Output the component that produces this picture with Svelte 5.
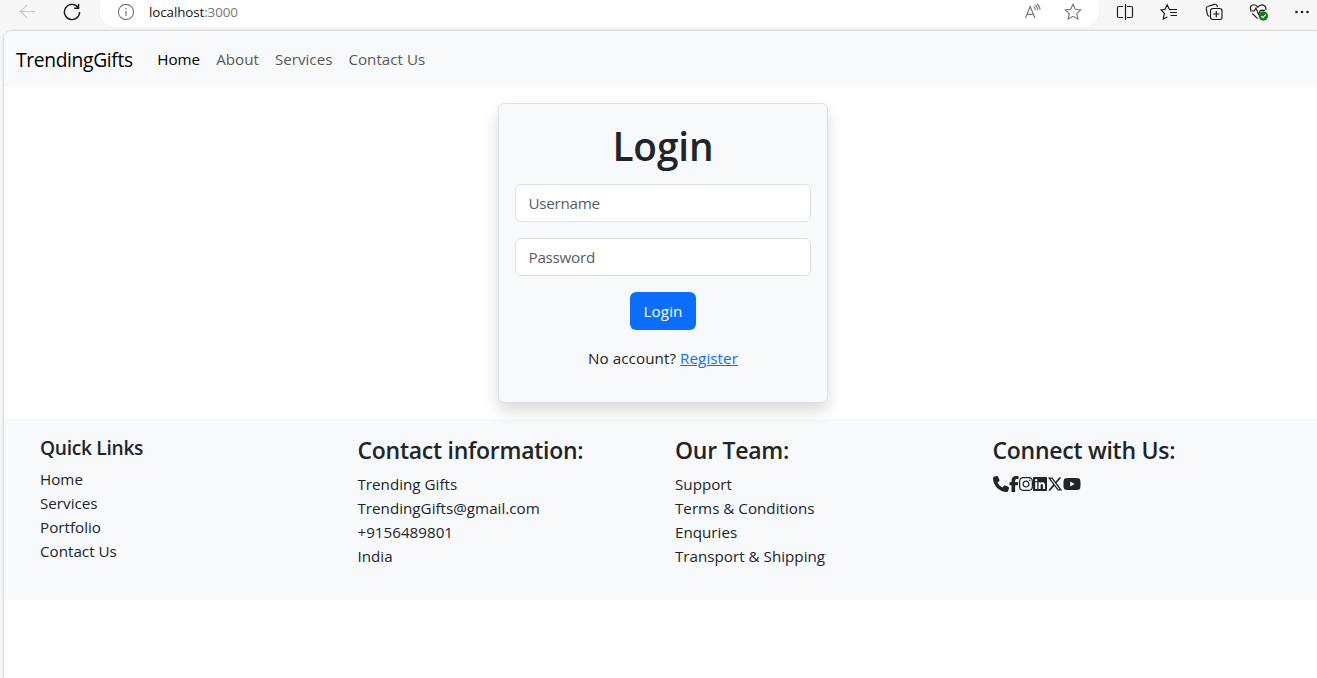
<script>
  const nav = ['Home', 'About', 'Services', 'Contact Us'];
  const columns = [
    { title: 'Contact information:', lines: ['Trending Gifts', 'TrendingGifts@gmail.com', '+9156489801', 'India'] },
    { title: 'Our Team:', lines: ['Support', 'Terms & Conditions', 'Enquries', 'Transport & Shipping'] }
  ];
  const social = [
    { w: 512, d: 'M164.9 24.6c-7.7-18.6-28-28.5-47.4-23.2l-88 24C12.1 30.2 0 46 0 64C0 311.4 200.6 512 448 512c18 0 33.8-12.1 38.6-29.5l24-88c5.3-19.4-4.6-39.7-23.2-47.4l-96-40c-16.3-6.8-35.2-2.1-46.3 11.6L304.7 368C234.3 334.7 177.3 277.7 144 207.3L193.3 167c13.7-11.2 18.4-30 11.6-46.3l-40-96z' },
    { w: 320, d: 'M80 299.3V512H196V299.3h86.5l18-97.8H196V166.9c0-51.7 20.3-71.5 72.7-71.5c16.3 0 29.4 .4 37 1.2V7.9C291.4 4 256.4 0 236.2 0C129.3 0 80 50.5 80 159.4v42.1H14v97.8H80z' },
    { w: 448, d: 'M224.1 141c-63.6 0-114.9 51.3-114.9 114.9s51.3 114.9 114.9 114.9S339 319.5 339 255.9 287.7 141 224.1 141zm0 189.6c-41.1 0-74.7-33.5-74.7-74.7s33.5-74.7 74.7-74.7 74.7 33.5 74.7 74.7-33.6 74.7-74.7 74.7zm146.4-194.3c0 14.9-12 26.8-26.8 26.8-14.9 0-26.8-12-26.8-26.8s12-26.8 26.8-26.8 26.8 12 26.8 26.8zm76.1 27.2c-1.7-35.9-9.9-67.7-36.2-93.9-26.2-26.2-58-34.4-93.9-36.2-37-2.1-147.9-2.1-184.9 0-35.8 1.7-67.6 9.9-93.9 36.1s-34.4 58-36.2 93.9c-2.1 37-2.1 147.9 0 184.9 1.7 35.9 9.9 67.7 36.2 93.9s58 34.4 93.9 36.2c37 2.1 147.9 2.1 184.9 0 35.9-1.7 67.7-9.9 93.9-36.2 26.2-26.2 34.4-58 36.2-93.9 2.1-37 2.1-147.8 0-184.8zM398.8 388c-7.8 19.6-22.9 34.7-42.6 42.6-29.5 11.7-99.5 9-132.1 9s-102.7 2.6-132.1-9c-19.6-7.8-34.7-22.9-42.6-42.6-11.7-29.5-9-99.5-9-132.1s-2.6-102.7 9-132.1c7.8-19.6 22.9-34.7 42.6-42.6 29.5-11.7 99.5-9 132.1-9s102.7-2.6 132.1 9c19.6 7.8 34.7 22.9 42.6 42.6 11.7 29.5 9 99.5 9 132.1s2.7 102.7-9 132.1z' },
    { w: 448, d: 'M416 32H31.9C14.3 32 0 46.5 0 64.3v383.4C0 465.5 14.3 480 31.9 480H416c17.6 0 32-14.5 32-32.3V64.3c0-17.8-14.4-32.3-32-32.3zM135.4 416H69V202.2h66.5V416zm-33.2-243c-21.3 0-38.5-17.3-38.5-38.5S80.9 96 102.2 96c21.2 0 38.5 17.3 38.5 38.5 0 21.3-17.2 38.5-38.5 38.5zm282.1 243h-66.4V312c0-24.8-.5-56.7-34.5-56.7-34.6 0-39.9 27-39.9 54.9V416h-66.4V202.2h63.7v29.2h.9c8.9-16.8 30.6-34.5 62.9-34.5 67.2 0 79.7 44.3 79.7 101.9V416z' },
    { w: 512, d: 'M389.2 48h70.6L305.6 224.2 487 464H345L233.7 318.6 106.5 464H35.8L200.7 275.5 26.8 48H172.4L272.9 180.9 389.2 48zM364.4 421.8h39.1L151.1 88h-42L364.4 421.8z' },
    { w: 576, d: 'M549.655 124.083c-6.281-23.65-24.787-42.276-48.284-48.597C458.781 64 288 64 288 64S117.22 64 74.629 75.486c-23.497 6.322-42.003 24.947-48.284 48.597-11.412 42.867-11.412 132.305-11.412 132.305s0 89.438 11.412 132.305c6.281 23.65 24.787 41.5 48.284 47.821C117.22 448 288 448 288 448s170.78 0 213.371-11.486c23.497-6.321 42.003-24.171 48.284-47.821 11.412-42.867 11.412-132.305 11.412-132.305s0-89.438-11.412-132.305zm-317.51 213.508V175.185l142.739 81.205-142.739 81.201z' }
  ];
</script>

<div class="window">
  <div class="toolbar">
    <svg class="back" width="18" height="18" viewBox="0 0 18 18"><path d="M16.5 8.5H1.5M8 2.2 1.4 8.5 8 14.8" /></svg>
    <svg class="reload" width="18" height="18" viewBox="0 0 18 18"><path d="M16.6 9A7.6 7.6 0 1 1 14.9 4.2M15.6 1V5.3H11.2" /></svg>
    <div class="address">
      <svg class="info" width="18" height="18" viewBox="0 0 18 18"><circle cx="9" cy="9" r="7.6" /><path d="M9 8V13M9 5V6.4" /></svg>
      <span class="url"><b>localhost</b>:3000</span>
      <svg class="read" width="18" height="18" viewBox="0 0 18 18"><path d="M1.5 15 6.2 3.5 10.9 15M3 11.4H9.4M9.8 3.6Q11.3 5 11.3 7.2M11.3 2Q13.8 4 13.7 7.2M13 .9Q16 3.2 15.9 6.8" /></svg>
      <svg class="star" width="18" height="18" viewBox="0 0 18 18"><path d="M9 1.3 11.3 6.3 16.8 6.9 12.7 10.6 13.9 16 9 13.3 4.1 16 5.3 10.6 1.2 6.9 6.7 6.3Z" /></svg>
    </div>
    <div class="tools">
      <svg width="18" height="18" viewBox="0 0 18 18"><path d="M7 3.5H3Q1.5 3.5 1.5 5V13Q1.5 14.5 3 14.5H7M11 3.5H15Q16.5 3.5 16.5 5V13Q16.5 14.5 15 14.5H11M9.5 1V17" /></svg>
      <svg width="18" height="18" viewBox="0 0 18 18"><path d="M11.9 6.8 9.5 6.4 7.2 1.7 4.9 6.4 1 7 4.4 10.4 3.2 16 7.4 13.9M10.5 6.5H17M10 9.5H17M10.5 12.5H17" /></svg>
      <svg width="18" height="18" viewBox="0 0 18 18"><path d="M4.4 13.4Q2.6 13.1 2.4 11.3L1.3 5.8Q1 4 2.8 3.5L9.3 1.4Q11.2 .9 12 2.6L12.4 4M7.7 5.5H14.8Q17 5.5 17 7.7V14.3Q17 16.5 14.8 16.5H7.7Q5.5 16.5 5.5 14.3V7.7Q5.5 5.5 7.7 5.5ZM11.3 8V14.2M8.2 11H14.4" /></svg>
      <svg width="20" height="18" viewBox="0 0 20 18"><path d="M2 7.3Q.2 3.7 3 2.2 6.3.8 8.8 4.1 11.8.5 15.2 2.5 17.6 4.2 16.7 7M1 8H5.3L7 5 9.5 11.4 11.4 7.4H16M3.3 10.5 8.6 15.7" /><circle class="ok" cx="14.4" cy="13" r="4.7" /><path class="tick" d="m12.2 13.1 1.6 1.6 3-3.1" /></svg>
      <svg class="dots" width="18" height="18" viewBox="0 0 18 18"><circle cx="3.5" cy="9" r="1.3" /><circle cx="9" cy="9" r="1.3" /><circle cx="14.5" cy="9" r="1.3" /></svg>
    </div>
  </div>

  <div class="page">
    <nav>
      <span class="brand">TrendingGifts</span>
      {#each nav as item, i}<a href="#top" class:active={i === 0}>{item}</a>{/each}
    </nav>

    <main>
      <form class="card">
        <h1>Login</h1>
        <input type="text" placeholder="Username" />
        <input type="password" placeholder="Password" />
        <button type="button">Login</button>
        <p>No account? <a href="#register">Register</a></p>
      </form>
    </main>

    <footer>
      <section>
        <h5>Quick Links</h5>
        <ul>{#each ['Home', 'Services', 'Portfolio', 'Contact Us'] as line}<li>{line}</li>{/each}</ul>
      </section>
      {#each columns as col}
        <section>
          <h4>{col.title}</h4>
          <ul>{#each col.lines as line}<li>{line}</li>{/each}</ul>
        </section>
      {/each}
      <section>
        <h4>Connect with Us:</h4>
        <div class="social">
          {#each social as icon}
            <svg width={icon.w / 32} height="16" viewBox="0 0 {icon.w} 512"><path d={icon.d} /></svg>
          {/each}
        </div>
      </section>
    </footer>
  </div>
</div>

<style>
  :global(body) { margin: 0; overflow: hidden; }
  * { box-sizing: border-box; }
  .window { width: 1317px; height: 678px; overflow: hidden; background: #f7f7f7; color: #212529; font: 400 15.2px/24px "Open Sans", "Noto Sans", sans-serif; display: flex; flex-direction: column; }
  .toolbar { height: 31px; flex: none; display: flex; align-items: flex-start; padding-left: 19px; }
  .toolbar svg { fill: none; stroke: #1b1b1b; stroke-width: 1.15; flex: none; margin-top: 3px; }
  .toolbar .back { stroke: #c8c8c8; }
  .toolbar .reload { margin-left: 26px; stroke-width: 1.4; }
  .address { width: 999px; height: 27px; margin-left: 19px; padding: 0 17px 0 17px; display: flex; background: #fff; border-radius: 0 0 16px 16px / 0 0 14px 14px; box-shadow: 0 0 2px #0001; }
  .address svg { stroke: #767676; }
  .address .star { margin-left: 22px; }
  .url { flex: 1; margin-left: 14px; font-size: 13.4px; line-height: 24px; color: #767676; letter-spacing: -0.1px; }
  .url b { font-weight: 400; color: #111; }
  .tools { display: flex; margin-left: 17px; gap: 26.4px; }
  .tools .dots { fill: #1b1b1b; stroke: none; margin-left: -3px; }
  .tools .ok { fill: #107c10; stroke: none; }
  .tools .tick { stroke: #fff; }
  .page { flex: 1; margin-left: 4px; background: #fff; border-radius: 8px 0 0 0; box-shadow: 0 0 2px 1px #0002; overflow: hidden; }
  nav { height: 56px; display: flex; align-items: center; background: #f8f9fa; padding: 0 12px 0 12px; }
  nav a { color: #595a5b; text-decoration: none; padding: 0 8px; }
  nav a.active { color: #000; }
  .brand { font-size: 19.2px; line-height: 30px; letter-spacing: -0.32px; color: #000; margin-right: 16.4px; padding-top: 1px; }
  main { height: 332px; padding-top: 16px; display: flex; justify-content: center; align-items: flex-start; padding-left: 5px; }
  .card { width: 330px; height: 300px; padding: 16px; border: 1px solid #dee2e6; border-radius: 6px; background: #f8f9fa; box-shadow: 0 8px 16px rgba(0,0,0,.15); display: flex; flex-direction: column; align-items: center; }
  h1 { margin: 2px 0 14px; font-size: 38.8px; line-height: 48px; font-weight: 600; letter-spacing: -0.1px; }
  input { width: 296px; height: 38px; flex: none; margin: 0 0 16px; padding: 6px 12.5px; border: 1px solid #dee2e6; border-radius: 6px; background: #fff; font: inherit; letter-spacing: -0.25px; }
  input::placeholder { color: #595c5f; opacity: 1; }
  button { width: 66px; height: 38px; flex: none; padding: 0; border: 0; border-radius: 6px; background: #0d6efd; color: #fff; font: inherit; letter-spacing: 0.1px; }
  p { margin: 16px 0 0; letter-spacing: 0.07px; }
  p a { color: #0d6efd; }
  footer { height: 181px; background: #f8f9fa; display: grid; grid-template-columns: repeat(4, 317.5px); padding: 16px 0 0 36px; }
  h4, h5 { margin: 0; font-weight: 600; }
  h4 { font-size: 23px; line-height: 29px; margin: 1px 0 7px; letter-spacing: -0.27px; }
  h5 { font-size: 19.2px; line-height: 24px; margin: 1px 0 7px; letter-spacing: -0.3px; }
  ul { margin: 0; padding: 0; list-style: none; }
  .social { display: flex; padding-top: 4px; }
  .social svg { fill: #212529; }
</style>
